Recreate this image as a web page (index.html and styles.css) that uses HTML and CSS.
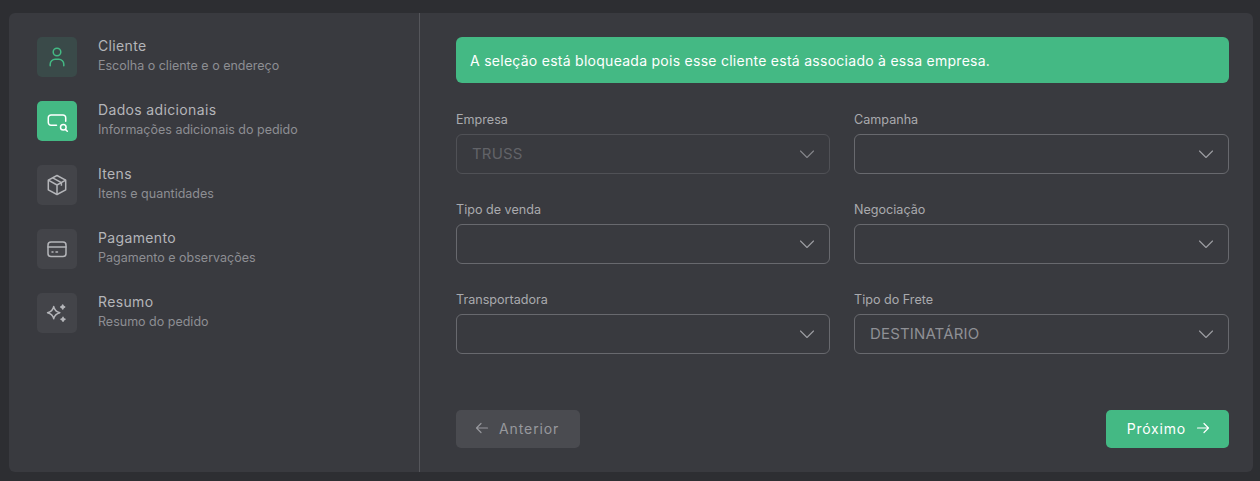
FILE: index.html
```html
<!DOCTYPE html>
<html lang="pt-BR">
<head>
    <meta charset="UTF-8">
    <meta name="viewport" content="width=device-width, initial-scale=1.0">
    <title>Novo Pedido</title>
    <link rel="stylesheet" href="styles.css">
</head>
<body>
    <div class="card">
        <aside class="steps">
            <div class="step step-done">
                <div class="step-icon">
                    <svg width="24" height="24" viewBox="0 0 24 24" fill="none" stroke="currentColor" stroke-width="1.5" stroke-linecap="round"><circle cx="12" cy="7" r="3.8"/><path d="M5.2 20.7v-1.4a5 5 0 0 1 5-5h3.600a5 5 0 0 1 5 5v1.400"/></svg>
                </div>
                <div class="step-text">
                    <div class="step-title">Cliente</div>
                    <div class="step-sub">Escolha o cliente e o endereço</div>
                </div>
            </div>
            <div class="step step-active">
                <div class="step-icon">
                    <svg width="24" height="24" viewBox="0 0 24 24" fill="none" stroke="currentColor" stroke-width="1.5" stroke-linecap="round" stroke-linejoin="round"><path d="M11.5 16.3H6a2.700 2.700 0 0 1-2.700-2.700V8.700A2.700 2.700 0 0 1 6 6h12a2.700 2.700 0 0 1 2.700 2.700v3.500"/><circle cx="18.300" cy="18.300" r="2.800"/><path d="M20.600 20.600 22.300 22.300"/></svg>
                </div>
                <div class="step-text">
                    <div class="step-title">Dados adicionais</div>
                    <div class="step-sub">Informações adicionais do pedido</div>
                </div>
            </div>
            <div class="step">
                <div class="step-icon">
                    <svg width="24" height="24" viewBox="0 0 24 24" fill="none" stroke="currentColor" stroke-width="1.5" stroke-linejoin="round"><path d="M12 2.500l8.700 4.700v9.600L12 21.500l-8.700-4.700V7.200z"/><path d="M3.300 7.200l8.700 4.800 8.700-4.800M12 12v9.500M7.700 4.900l8.700 4.700v3.200"/></svg>
                </div>
                <div class="step-text">
                    <div class="step-title">Itens</div>
                    <div class="step-sub">Itens e quantidades</div>
                </div>
            </div>
            <div class="step">
                <div class="step-icon">
                    <svg width="24" height="24" viewBox="0 0 24 24" fill="none" stroke="currentColor" stroke-width="1.5" stroke-linecap="round"><rect x="3" y="5" width="18" height="14.500" rx="3"/><path d="M3 10h18M7 15h1M11 15h1.500"/></svg>
                </div>
                <div class="step-text">
                    <div class="step-title">Pagamento</div>
                    <div class="step-sub">Pagamento e observações</div>
                </div>
            </div>
            <div class="step">
                <div class="step-icon">
                    <svg width="24" height="24" viewBox="0 0 24 24" fill="none" stroke="currentColor" stroke-width="1.4" stroke-linejoin="round"><path d="M8.700 5.500c.7 3.600 2.500 5.400 6.200 6.200-3.700.8-5.500 2.600-6.200 6.200-.7-3.600-2.500-5.400-6.200-6.200 3.700-.8 5.500-2.600 6.200-6.200z"/><path d="M17.700 4c.3 1.200.8 1.700 2 2-1.200.3-1.700.8-2 2-.3-1.200-.8-1.700-2-2 1.200-.3 1.700-.8 2-2zM18 16.300c.3 1.200.8 1.700 2 2-1.200.3-1.700.8-2 2-.3-1.200-.8-1.700-2-2 1.200-.3 1.700-.8 2-2z" fill="currentColor"/></svg>
                </div>
                <div class="step-text">
                    <div class="step-title">Resumo</div>
                    <div class="step-sub">Resumo do pedido</div>
                </div>
            </div>
        </aside>

        <main class="content">
            <div class="alert">A seleção está bloqueada pois esse cliente está associado à essa empresa.</div>

            <div class="form-grid">
                <div class="field">
                    <label class="field-label">Empresa</label>
                    <div class="select select-disabled">
                        <span>TRUSS</span>
                        <svg class="chevron" width="16" height="16" viewBox="0 0 16 16" fill="none" stroke="currentColor" stroke-width="1.1" stroke-linecap="round" stroke-linejoin="round"><path d="M1.500 5l6.500 6.500L14.500 5"/></svg>
                    </div>
                </div>
                <div class="field">
                    <label class="field-label">Campanha</label>
                    <div class="select">
                        <span></span>
                        <svg class="chevron" width="16" height="16" viewBox="0 0 16 16" fill="none" stroke="currentColor" stroke-width="1.1" stroke-linecap="round" stroke-linejoin="round"><path d="M1.500 5l6.500 6.500L14.500 5"/></svg>
                    </div>
                </div>
                <div class="field">
                    <label class="field-label">Tipo de venda</label>
                    <div class="select">
                        <span></span>
                        <svg class="chevron" width="16" height="16" viewBox="0 0 16 16" fill="none" stroke="currentColor" stroke-width="1.1" stroke-linecap="round" stroke-linejoin="round"><path d="M1.500 5l6.500 6.500L14.500 5"/></svg>
                    </div>
                </div>
                <div class="field">
                    <label class="field-label">Negociação</label>
                    <div class="select">
                        <span></span>
                        <svg class="chevron" width="16" height="16" viewBox="0 0 16 16" fill="none" stroke="currentColor" stroke-width="1.1" stroke-linecap="round" stroke-linejoin="round"><path d="M1.500 5l6.500 6.500L14.500 5"/></svg>
                    </div>
                </div>
                <div class="field">
                    <label class="field-label">Transportadora</label>
                    <div class="select">
                        <span></span>
                        <svg class="chevron" width="16" height="16" viewBox="0 0 16 16" fill="none" stroke="currentColor" stroke-width="1.1" stroke-linecap="round" stroke-linejoin="round"><path d="M1.500 5l6.500 6.500L14.500 5"/></svg>
                    </div>
                </div>
                <div class="field">
                    <label class="field-label">Tipo do Frete</label>
                    <div class="select select-value">
                        <span>DESTINATÁRIO</span>
                        <svg class="chevron" width="16" height="16" viewBox="0 0 16 16" fill="none" stroke="currentColor" stroke-width="1.1" stroke-linecap="round" stroke-linejoin="round"><path d="M1.500 5l6.500 6.500L14.500 5"/></svg>
                    </div>
                </div>
            </div>

            <div class="actions">
                <button class="btn btn-prev">
                    <svg width="16" height="16" viewBox="0 0 16 16" fill="none" stroke="currentColor" stroke-width="1.2" stroke-linecap="round" stroke-linejoin="round"><path d="M13.500 8H2.500M7 3.500L2.500 8 7 12.500"/></svg>
                    Anterior
                </button>
                <button class="btn btn-next">
                    Próximo
                    <svg width="16" height="16" viewBox="0 0 16 16" fill="none" stroke="currentColor" stroke-width="1.2" stroke-linecap="round" stroke-linejoin="round"><path d="M2.500 8h11M9 3.500L13.500 8 9 12.500"/></svg>
                </button>
            </div>
        </main>
    </div>
</body>
</html>
```

FILE: styles.css
```css
body {
    font-family: "Inter", "Noto Sans", sans-serif;
    background-color: #2d2e32;
    margin: 0;
    padding: 13px 7px 9px 9px;
    height: 459px;
    overflow: hidden;
}

.card {
    display: flex;
    height: 459px;
    background: #393a3f;
    border-radius: 6px;
}

.steps {
    width: 411px;
    flex-shrink: 0;
    box-sizing: border-box;
    padding: 24px 28px;
    border-right: 1px solid #55565b;
    display: flex;
    flex-direction: column;
    gap: 24px;
}

.step {
    display: flex;
    align-items: flex-start;
    gap: 21px;
    height: 40px;
}

.step-icon {
    width: 40px;
    height: 40px;
    border-radius: 5px;
    background: #434449;
    color: #b4b5b9;
    display: flex;
    align-items: center;
    justify-content: center;
}

.step-done .step-icon {
    background: #3a4a49;
    color: #44b984;
}

.step-active .step-icon {
    background: #44b984;
    color: white;
}

.step-text {
    margin-top: -1px;
}

.step-title {
    font-size: 14px;
    letter-spacing: 0.35px;
    line-height: 20px;
    color: #b4b5b9;
}

.step-sub {
    font-size: 12.5px;
    line-height: 19px;
    color: #8d8e93;
}

.content {
    flex: 1;
    padding: 24px 24px 24px 36px;
    display: flex;
    flex-direction: column;
}

.alert {
    height: 46px;
    box-sizing: border-box;
    padding: 0 14px;
    display: flex;
    align-items: center;
    background: #44b984;
    color: white;
    border-radius: 6px;
    font-size: 14px;
    letter-spacing: 0.27px;
}

.form-grid {
    display: grid;
    grid-template-columns: 374px 375px;
    column-gap: 24px;
    row-gap: 25px;
    margin-top: 26px;
}

.field-label {
    display: block;
    font-size: 12.6px;
    line-height: 20px;
    padding-top: 1px;
    margin-bottom: 4px;
    color: #a9aaae;
}

.select {
    height: 40px;
    box-sizing: border-box;
    border: 1px solid #68696e;
    border-radius: 6px;
    padding: 0 14px 1px 15px;
    display: flex;
    align-items: center;
    justify-content: space-between;
    font-size: 15px;
    letter-spacing: 0.15px;
    color: #8f9095;
}

.select-disabled {
    border-color: #505156;
    color: #626368;
}

.chevron {
    color: #9d9ea3;
}

.select-disabled .chevron {
    color: #85868b;
}

.actions {
    margin-top: auto;
    display: flex;
    justify-content: space-between;
}

.btn {
    height: 38px;
    border: none;
    border-radius: 5px;
    padding: 0 21px 2px 18px;
    display: flex;
    align-items: center;
    gap: 9px;
    font-family: inherit;
    font-size: 14px;
    letter-spacing: 0.9px;
}

.btn-prev {
    background: #4a4b50;
    color: #97989d;
}

.btn-next {
    background: #44b984;
    color: white;
    padding: 0 18px 2px 21px;
    letter-spacing: 0.8px;
}
```
